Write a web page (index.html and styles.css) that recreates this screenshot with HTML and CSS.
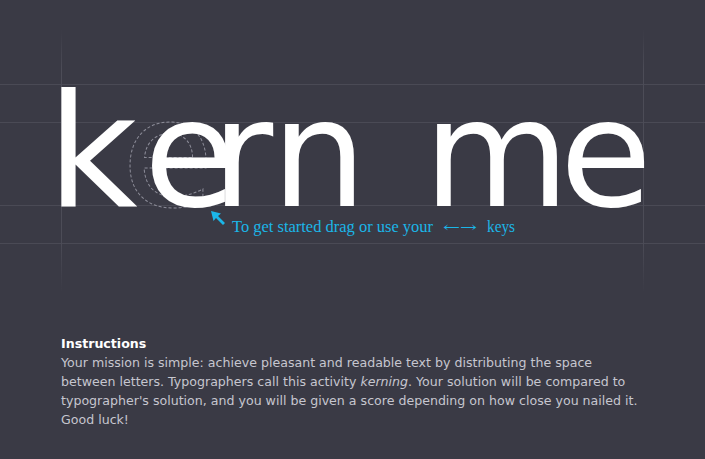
FILE: index.html
```html
<!DOCTYPE html>
<html lang="en">
<head>
<meta charset="utf-8">
<title>kern me</title>
<link rel="stylesheet" href="styles.css">
</head>
<body>
<main class="page">
  <svg class="stage" width="705" height="310" viewBox="0 0 705 310" xmlns="http://www.w3.org/2000/svg">
    <defs>
      <linearGradient id="fade" x1="0" y1="0" x2="0" y2="1">
        <stop offset="0" stop-color="#4c4c57" stop-opacity="0"/>
        <stop offset="0.15" stop-color="#4c4c57" stop-opacity="1"/>
        <stop offset="0.8" stop-color="#4c4c57" stop-opacity="1"/>
        <stop offset="1" stop-color="#4c4c57" stop-opacity="0"/>
      </linearGradient>
    </defs>
    <g class="guides">
      <rect x="0" y="84" width="705" height="1"/>
      <rect x="0" y="122" width="705" height="1"/>
      <rect x="0" y="205" width="705" height="1"/>
      <rect x="0" y="243" width="705" height="1"/>
      <rect class="vguide" x="61" y="30" width="1" height="262"/>
      <rect class="vguide" x="643" y="30" width="1" height="262"/>
    </g>
    <text class="ghost" x="121.7" y="205.5">e</text>
    <g class="word">
      <text class="tall" x="47.3" y="205.5">k</text>
      <text x="143.7" y="205.5">e</text>
      <text x="211.4" y="205.5">r</text>
      <text x="271.4" y="205.5">n</text>
      <text x="423.4" y="205.5">m</text>
      <text x="559.7" y="205.5">e</text>
    </g>
    <path class="pointer" d="M211 211 L221 213.5 L218 216 L225 223 L223 225 L216 218 L213.5 221 Z"/>
    <text class="hint" y="232"><tspan x="232" textLength="201" lengthAdjust="spacingAndGlyphs">To get started drag or use your</tspan></text>
    <text class="hint-keys" x="443" y="231.5" textLength="34" lengthAdjust="spacingAndGlyphs">←→</text>
    <text class="hint" x="487" y="232" textLength="28" lengthAdjust="spacingAndGlyphs">keys</text>
  </svg>
  <section class="instructions">
    <h1 class="title">Instructions</h1>
    <p class="copy">Your mission is simple: achieve pleasant and readable text by distributing the space<br>between letters. Typographers call this activity <em>kerning</em>. Your solution will be compared to<br>typographer's solution, and you will be given a score depending on how close you nailed it.<br>Good luck!</p>
  </section>
</main>
</body>
</html>
```

FILE: styles.css
```css
html, body {
  margin: 0;
  padding: 0;
  background: #3a3a45;
}

.page {
  width: 705px;
  height: 459px;
  overflow: hidden;
  font-family: "DejaVu Sans", Verdana, sans-serif;
}

.stage {
  display: block;
}

.guides rect {
  fill: #4a4a55;
}

.guides .vguide {
  fill: url(#fade);
}

.word text {
  font-family: "DejaVu Sans", sans-serif;
  font-size: 150px;
  fill: #ffffff;
}

.word .tall {
  font-size: 156px;
}

.ghost {
  font-family: "DejaVu Sans", sans-serif;
  font-size: 150px;
  fill: none;
  stroke: #8c8c98;
  stroke-width: 1;
  stroke-dasharray: 3 2;
}

.pointer {
  fill: #1bb6e8;
}

.hint {
  font-family: "Liberation Serif", "Times New Roman", serif;
  font-size: 16px;
  fill: #1bb6e8;
}

.hint-keys {
  font-family: "DejaVu Serif", serif;
  font-size: 14px;
  fill: #1bb6e8;
}

.instructions {
  padding: 24px 0 0 61px;
}

.title {
  margin: 0;
  font-size: 12.6px;
  line-height: 19px;
  font-weight: bold;
  color: #ffffff;
}

.copy {
  margin: 0;
  font-size: 12.6px;
  line-height: 19px;
  color: #c6c6cf;
  white-space: nowrap;
}

.copy em {
  font-style: italic;
}
```
